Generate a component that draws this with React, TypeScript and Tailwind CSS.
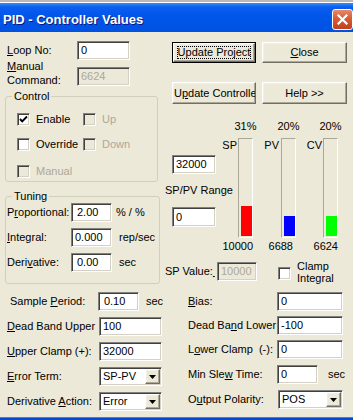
import { ReactNode } from 'react'

const sunken =
  'border border-t-[#808080] border-l-[#808080] border-r-white border-b-white shadow-[inset_1px_1px_0_#404040,inset_-1px_-1px_0_#d4d0c8]'
const raised =
  'border border-t-white border-l-white border-r-[#716f64] border-b-[#716f64] shadow-[inset_-1px_-1px_0_#aca899,inset_1px_1px_0_#f1efe2]'

function Field({ text, className = '', disabled = false, indent = false }: { text: string; className?: string; disabled?: boolean; indent?: boolean }) {
  return (
    <div
      className={`flex h-[19px] shrink-0 items-center overflow-hidden whitespace-nowrap ${sunken} ${indent ? 'pl-[5px]' : 'pl-[3px]'} ${disabled ? 'bg-[#ece9d8] text-[#aca899]' : 'bg-white'} ${className}`}
    >
      {text}
    </div>
  )
}

function Combo({ text, className = '' }: { text: string; className?: string }) {
  return (
    <div className={`flex h-[19px] shrink-0 bg-white p-[1px] ${sunken} ${className}`}>
      <span className="flex flex-1 items-center pl-[2px]">{text}</span>
      <div className={`flex w-[15px] items-center justify-center bg-[#ece9d8] ${raised}`}>
        <svg width="7" height="4" viewBox="0 0 7 4" aria-hidden="true">
          <path d="M0 0h7L3.5 4z" fill="#000" />
        </svg>
      </div>
    </div>
  )
}

function Check({ checked = false, disabled = false, className = '' }: { checked?: boolean; disabled?: boolean; className?: string }) {
  return (
    <div className={`flex h-[13px] w-[13px] shrink-0 items-center justify-center ${sunken} ${disabled ? 'bg-[#ece9d8]' : 'bg-white'} ${className}`}>
      {checked && (
        <svg width="9" height="9" viewBox="0 0 9 9" aria-hidden="true">
          <path d="M1 4l2.2 2.3L8 1.5" stroke="#000" strokeWidth={1.9} fill="none" />
        </svg>
      )}
    </div>
  )
}

function CheckItem({ label, checked, disabled, className = '' }: { label: string; checked?: boolean; disabled?: boolean; className?: string }) {
  return (
    <div className={`flex items-center gap-[6px] ${className}`}>
      <Check checked={checked} disabled={disabled} />
      <span className={disabled ? 'text-[#aca899]' : ''}>{label}</span>
    </div>
  )
}

function Group({ title, className = '', children }: { title: string; className?: string; children: ReactNode }) {
  return (
    <div className={`relative rounded-[3px] border border-[#d0d0bf] ${className}`}>
      <span className="absolute -top-[7px] left-[6px] bg-[#ece9d8] px-[2px]">{title}</span>
      {children}
    </div>
  )
}

function Button({ children, className = '' }: { children: ReactNode; className?: string }) {
  return (
    <div className={`flex items-center justify-center overflow-hidden whitespace-nowrap bg-[#ece9d8] ${raised} ${className}`}>
      {children}
    </div>
  )
}

function Meter({ fill, color }: { fill: string; color: string }) {
  return (
    <div className="row-start-2 flex h-[100px] flex-col justify-end border border-t-[#aca899] border-l-[#aca899] border-r-white border-b-white pb-[1px] pl-[2px]">
      <div className={`${fill} ${color}`} />
    </div>
  )
}

export default function App() {
  return (
    <div className="flex h-[420px] w-[353px] flex-col overflow-hidden bg-[#ece9d8] font-['Liberation_Sans',Arial,sans-serif] text-[11px] leading-[13px] text-black">
      {/* window frame top */}
      <div className="h-[3px] border-b border-white bg-[#b9b9b9]" />

      {/* Title bar */}
      <div className="flex h-[29px] items-start justify-between bg-[linear-gradient(180deg,#3d8af7_0%,#0a5ff0_14%,#0056e8_45%,#0052e2_100%)] pl-[3px]">
        <span className="mt-[9px] text-[13px] font-bold leading-[15px] text-white [text-shadow:1px_1px_#0a1883]">
          PID - Controller Values
        </span>
        <div className="mt-[6px] flex h-[21px] w-[21px] items-center justify-center rounded-[3px] border border-white bg-[linear-gradient(180deg,#e8896b_0%,#d85a36_45%,#c1401c_100%)]">
          <svg width="11" height="11" viewBox="0 0 11 11" aria-hidden="true">
            <path d="M1.5 1.5l8 8M9.5 1.5l-8 8" stroke="#fff" strokeWidth={2.2} strokeLinecap="square" />
          </svg>
        </div>
      </div>

      <div className="flex flex-1">
        {/* Left column */}
        <div className="flex w-[163px] flex-col">
          <div className="mt-[9px] flex h-[19px] items-center">
            <span className="w-[77px] pl-[7px]">
              <span className="underline">L</span>oop No:
            </span>
            <Field text="0" className="w-[53px]" />
          </div>
          <div className="mt-[7px] flex h-[19px] items-start">
            <span className="-mt-[8px] w-[77px] pl-[7px] leading-[14px]">
              <span className="underline">M</span>anual
              <br />
              Command:
            </span>
            <Field text="6624" disabled className="w-[53px]" />
          </div>

          <Group title="Control" className="ml-[5px] mt-[10px] h-[86px] w-[153px] pl-[11px] pt-[16px]">
            <div className="flex h-[13px]">
              <CheckItem checked label="Enable" className="w-[66px]" />
              <CheckItem disabled label="Up" />
            </div>
            <div className="mt-[12px] flex h-[13px]">
              <CheckItem label="Override" className="w-[66px]" />
              <CheckItem disabled label="Down" />
            </div>
            <div className="mt-[14px] flex h-[13px]">
              <CheckItem disabled label="Manual" />
            </div>
          </Group>

          <Group title="Tuning" className="ml-[5px] mt-[14px] h-[88px] w-[155px] pl-[1px] pt-[6px]">
            <div className="flex h-[19px] items-center">
              <span className="w-[64px]">
                P<span className="underline">r</span>oportional:
              </span>
              <Field text="2.00" indent className="w-[41px]" />
              <span className="ml-[4px]">% / %</span>
            </div>
            <div className="mt-[6px] flex h-[19px] items-center">
              <span className="w-[64px]">
                <span className="underline">I</span>ntegral:
              </span>
              <Field text="0.000" className="w-[41px]" />
              <span className="ml-[7px]">rep/sec</span>
            </div>
            <div className="mt-[6px] flex h-[19px] items-center">
              <span className="w-[64px]">
                Deri<span className="underline">v</span>ative:
              </span>
              <Field text="0.00" indent className="w-[41px]" />
              <span className="ml-[7px]">sec</span>
            </div>
          </Group>

          <div className="mt-[8px] flex flex-col gap-[6px]">
            <div className="flex h-[19px] items-center">
              <span className="w-[99px] pl-[10px]">
                Sample <span className="underline">P</span>eriod:
              </span>
              <Field text="0.10" indent className="w-[41px]" />
              <span className="ml-[7px]">sec</span>
            </div>
            <div className="flex h-[19px] items-center">
              <span className="w-[99px] whitespace-nowrap pl-[7px]">
                <span className="underline">D</span>ead Band Upper
              </span>
              <Field text="100" className="w-[63px]" />
            </div>
            <div className="flex h-[19px] items-center">
              <span className="w-[99px] pl-[7px]">
                <span className="underline">U</span>pper Clamp (+):
              </span>
              <Field text="32000" className="w-[63px]" />
            </div>
            <div className="flex h-[19px] items-center">
              <span className="w-[99px] pl-[7px]">
                <span className="underline">E</span>rror Term:
              </span>
              <Combo text="SP-PV" className="w-[63px]" />
            </div>
            <div className="flex h-[19px] items-center">
              <span className="w-[99px] whitespace-nowrap pl-[7px]">
                Derivative <span className="underline">A</span>ction:
              </span>
              <Combo text="Error" className="w-[63px]" />
            </div>
          </div>
        </div>

        {/* Right column */}
        <div className="flex flex-1 flex-col">
          <div className="mt-[10px] flex gap-[6px] pl-[9px]">
            <div className="h-[21px] w-[84px] border border-black">
              <Button className="relative h-full w-full">
                <span className="absolute inset-x-[3px] inset-y-[2px] border border-dotted border-black" />
                Update Project
              </Button>
            </div>
            <Button className="h-[21px] w-[85px]">
              <span className="underline">C</span>lose
            </Button>
          </div>
          <div className="mt-[19px] flex gap-[6px] pl-[9px]">
            <Button className="h-[22px] w-[84px] !justify-start pl-[1px]">
              U<span className="underline">p</span>date Controller
            </Button>
            <Button className="h-[22px] w-[85px]">Help &gt;&gt;</Button>
          </div>

          <div className="flex">
            <div className="flex w-[59px] flex-col">
              <Field text="32000" className="ml-[9px] mt-[51px] w-[44px]" />
              <span className="ml-[2px] mt-[10px] whitespace-nowrap">SP/PV Range</span>
              <Field text="0" className="ml-[9px] mt-[10px] h-[20px] w-[44px]" />
            </div>
            <div className="mt-[15px] grid grid-cols-[16px_15px_28px_15px_27px_15px] grid-rows-[19px_100px_auto]">
              <span className="col-start-2 row-start-1 flex justify-center whitespace-nowrap pt-[1px]">31%</span>
              <span className="col-start-4 row-start-1 flex justify-center whitespace-nowrap pt-[1px]">20%</span>
              <span className="col-start-6 row-start-1 flex justify-center whitespace-nowrap pt-[1px]">20%</span>

              <span className="col-start-1 row-start-2 pr-[1px] pt-[1px] text-right">SP</span>
              <Meter fill="h-[30px]" color="bg-[#ff0000]" />
              <span className="col-start-3 row-start-2 pr-[2px] pt-[1px] text-right">PV</span>
              <Meter fill="h-[20px]" color="bg-[#0000ff]" />
              <span className="col-start-5 row-start-2 pr-[1px] pt-[1px] text-right">CV</span>
              <Meter fill="h-[20px]" color="bg-[#00ff00]" />

              <span className="col-span-2 col-start-1 row-start-3 mt-[2px] whitespace-nowrap text-right">10000</span>
              <span className="col-span-2 col-start-3 row-start-3 mt-[2px] pr-[3px] text-right">6688</span>
              <span className="col-span-2 col-start-5 row-start-3 mt-[2px] text-right">6624</span>
            </div>
          </div>

          <div className="mt-[9px] flex h-[19px] items-center">
            <span className="ml-[2px] w-[52px] whitespace-nowrap">
              SP Value:<span className="underline">&#8202;&#8202;</span>
            </span>
            <Field text="10000" disabled className="w-[40px]" />
            <Check className="ml-[21px] mt-[4px]" />
            <span className="ml-[6px] leading-[12px]">
              Clamp
              <br />
              Integral
            </span>
          </div>

          <div className="mt-[11px] flex flex-col">
            <div className="flex h-[19px] items-center">
              <span className="w-[114px] pl-[25px]">
                <span className="underline">B</span>ias:
              </span>
              <Field text="0" className="w-[66px]" />
            </div>
            <div className="mt-[5px] flex h-[19px] items-center">
              <span className="w-[114px] whitespace-nowrap pl-[25px]">
                Dead Ba<span className="underline">n</span>d Lower
              </span>
              <Field text="-100" className="w-[66px]" />
            </div>
            <div className="mt-[5px] flex h-[19px] items-center">
              <span className="w-[114px] whitespace-nowrap pl-[25px]">
                L<span className="underline">o</span>wer Clamp&nbsp; (-):
              </span>
              <Field text="0" className="w-[66px]" />
            </div>
            <div className="mt-[6px] flex h-[19px] items-center">
              <span className="w-[114px] whitespace-nowrap pl-[25px]">
                Min Sle<span className="underline">w</span> Time:
              </span>
              <Field text="0" className="w-[41px]" />
              <span className="ml-[10px]">sec</span>
            </div>
            <div className="mt-[6px] flex h-[19px] items-center">
              <span className="w-[115px] whitespace-nowrap pl-[25px]">
                O<span className="underline">u</span>tput Polarity:
              </span>
              <Combo text="POS" className="w-[65px]" />
            </div>
          </div>
        </div>
      </div>

      {/* window frame bottom */}
      <div className="h-[3px] border-t border-[#3a7ef0] bg-[#0848d0]" />
    </div>
  )
}
